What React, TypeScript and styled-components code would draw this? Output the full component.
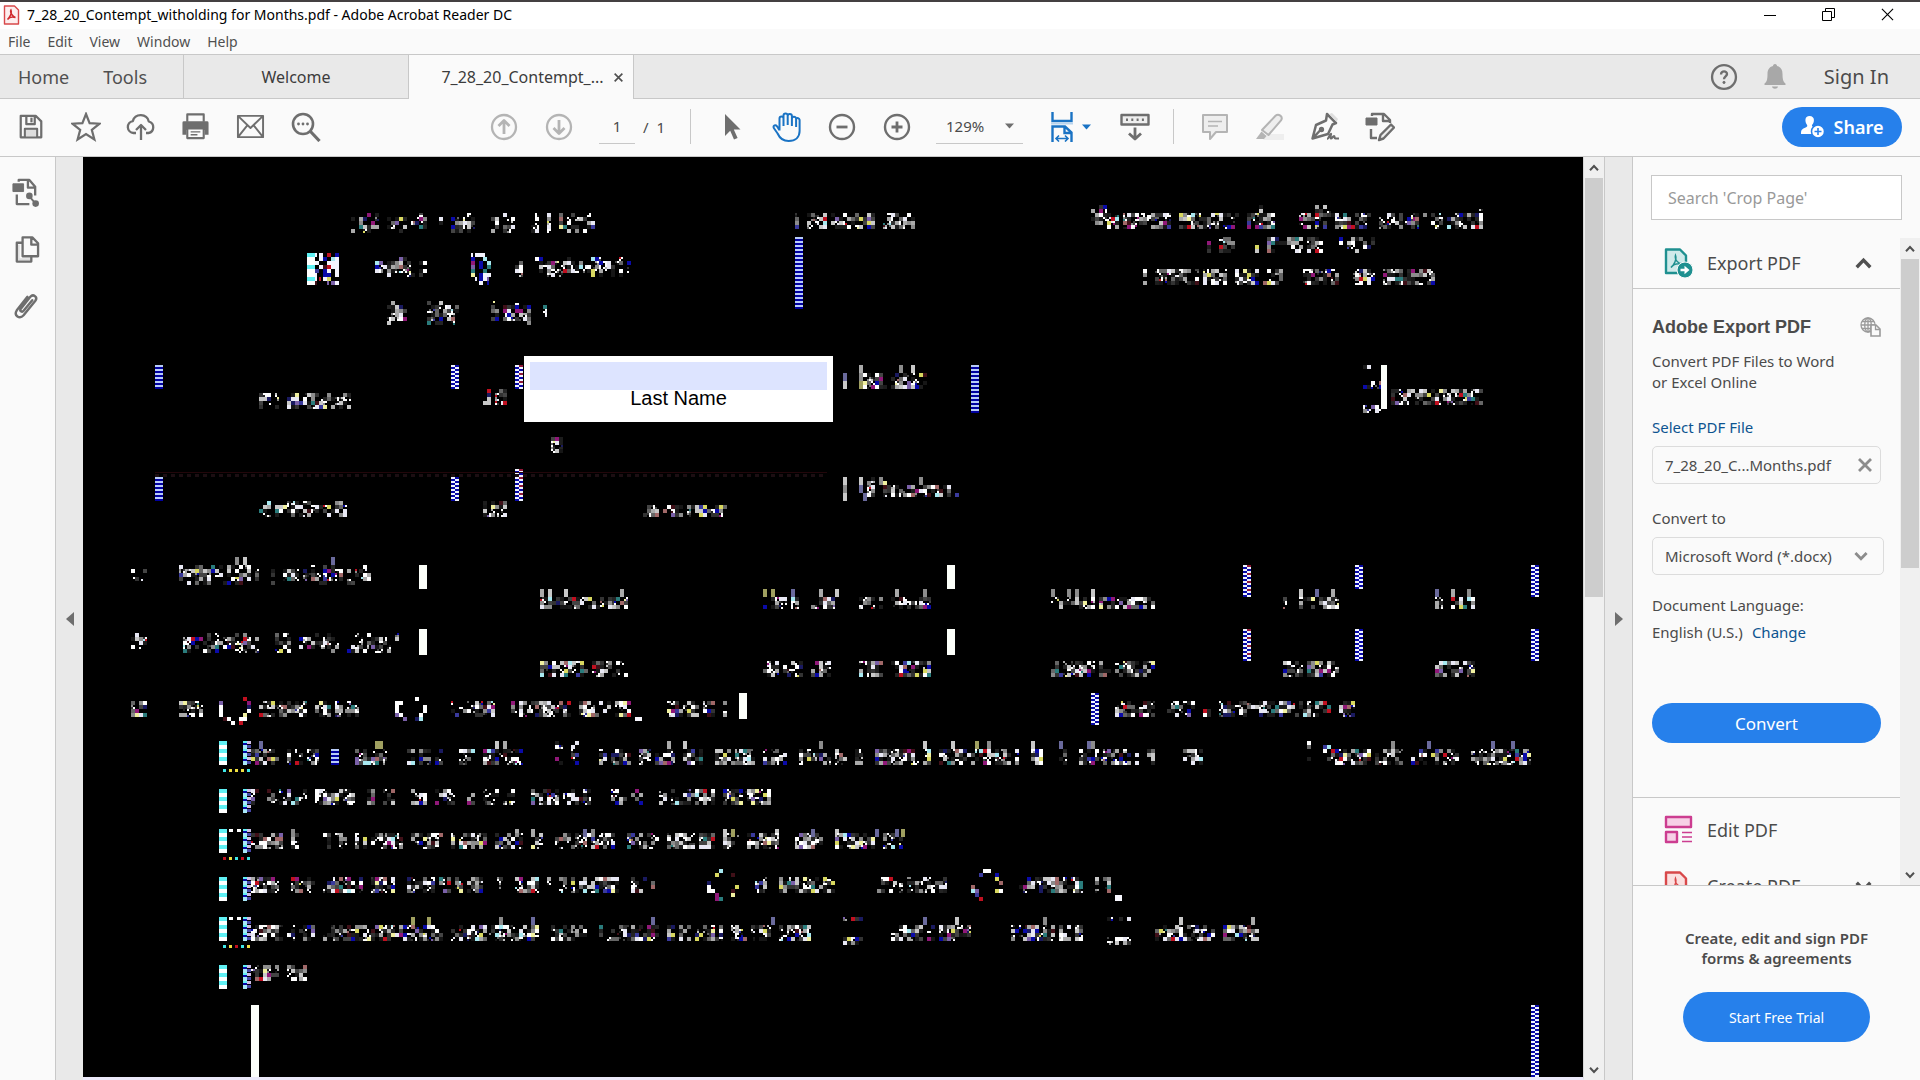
import React from "react";
import styled, { createGlobalStyle, css } from "styled-components";

const ui = `"Noto Sans", "Open Sans", sans-serif`;
const arial = `"Liberation Sans", Arial, sans-serif`;
const line = "#c8c8c8";
const grey = "#6e6e6e";
const blue = "#2680eb";

const Global = createGlobalStyle`
  * { box-sizing: border-box; }
  body { margin: 0; font-family: ${ui}; color: #4b4b4b; background: #fafafa; overflow: hidden; }
  button, input, select { font-family: inherit; color: inherit; margin: 0; }
  button { border: 0; background: none; padding: 0; cursor: pointer; }
  svg { display: block; flex: none; }
`;

const Window = styled.div`
  display: flex;
  flex-direction: column;
  height: 100vh;
  border-top: 2px solid #444041;
`;

const TitleBar = styled.header`
  display: flex;
  align-items: center;
  height: 27px;
  flex: none;
  padding: 0 3px 2px 3px;
  background: #fff;
`;
const Title = styled.h1`
  margin: 0 auto 0 7px;
  font-size: 14px;
  font-weight: 400;
  line-height: 20px;
  color: #000;
`;
const WindowButton = styled.button`
  display: grid;
  place-items: center;
  width: 59px;
  height: 25px;
`;

const MenuBar = styled.nav`
  display: flex;
  align-items: center;
  gap: 17px;
  height: 25px;
  flex: none;
  padding-left: 8px;
`;
const MenuItem = styled.button`
  font-size: 14px;
  line-height: 20px;
  color: #505050;
`;

const TabBar = styled.nav`
  display: flex;
  height: 45px;
  flex: none;
  background: #e9e9e9;
  border-top: 1px solid ${line};
  box-shadow: inset 0 -1px ${line};
`;
const HomeTabs = styled.div`
  display: flex;
  align-items: center;
  gap: 34px;
  width: 184px;
  padding-left: 18px;
  border-right: 1px solid ${line};
`;
const BigTab = styled.button`
  font-size: 18px;
  line-height: 24px;
  color: #505050;
`;
const DocTab = styled.div<{ $active?: boolean }>`
  display: flex;
  align-items: center;
  justify-content: center;
  gap: 10px;
  width: 225px;
  border-right: 1px solid ${line};
  ${(p) => p.$active && css`background: #fafafa; padding-left: 22px;`}
`;
const DocTabLabel = styled.button`
  font-size: 16px;
  line-height: 24px;
  color: #3c3c3c;
`;
const Account = styled.div`
  display: flex;
  align-items: center;
  gap: 38px;
  margin-left: auto;
  padding-right: 31px;
`;
const AccountIcons = styled.div`
  display: flex;
  align-items: center;
  gap: 26px;
`;
const SignIn = styled.button`
  font-size: 20px;
  line-height: 24px;
`;

const Toolbar = styled.div`
  display: flex;
  align-items: center;
  height: 58px;
  flex: none;
  padding: 0 18px 2px 3px;
  border-bottom: 1px solid ${line};
`;
const Group = styled.div<{ $gap?: number }>`
  display: flex;
  align-items: center;
  margin-left: ${(p) => p.$gap ?? 0}px;
`;
const Tool = styled.button`
  display: grid;
  place-items: center;
  width: 55px;
  height: 44px;
`;
const PageBox = styled.input`
  width: 36px;
  height: 34px;
  padding: 0;
  text-align: center;
  font-size: 15px;
  border: 0;
  border-bottom: 1px solid ${line};
  background: none;
`;
const PageTotal = styled.span`
  margin-left: 8px;
  width: 47px;
  font-size: 15px;
  white-space: pre;
`;
const Divider = styled.span`
  width: 1px;
  height: 35px;
  background: ${line};
`;
const ZoomWrap = styled.div`
  display: grid;
  align-items: center;
  width: 87px;
  margin-left: 12px;
  border-bottom: 1px solid ${line};
  & > * { grid-area: 1 / 1; }
  & > svg { justify-self: end; margin-right: 9px; pointer-events: none; }
`;
const ZoomSelect = styled.select`
  appearance: none;
  height: 33px;
  padding: 0 0 0 10px;
  border: 0;
  background: none;
  font-size: 15px;
`;
const FitTool = styled.button`
  display: flex;
  align-items: center;
  gap: 9px;
  width: 56px;
  height: 44px;
  margin-left: 28px;
`;
const Share = styled.button`
  display: flex;
  align-items: center;
  justify-content: center;
  gap: 9px;
  width: 120px;
  height: 40px;
  margin-left: auto;
  border-radius: 20px;
  background: ${blue};
  color: #fff;
  font-size: 18px;
  font-weight: 600;
`;

const Body = styled.div`
  display: flex;
  flex: 1;
  min-height: 0;
`;
const Rail = styled.nav`
  display: flex;
  flex-direction: column;
  width: 56px;
  padding-top: 14px;
  gap: 14px;
  border-right: 1px solid ${line};
`;
const RailButton = styled.button`
  display: grid;
  place-items: center;
  width: 50px;
  height: 43px;
`;
const Collapse = styled.button<{ $line?: boolean }>`
  display: grid;
  place-items: center;
  width: 27px;
  flex: none;
  background: #e9e9e9;
  ${(p) => p.$line && css`width: 28px; border-right: 1px solid ${line};`}
`;
const Canvas = styled.main`
  position: relative;
  flex: 1;
  min-width: 0;
  overflow: hidden;
  background: #000;
  border-right: 1px solid #d8d8d8;
  border-bottom: 3px solid #eceafa;
`;
const FieldCard = styled.label`
  position: absolute;
  left: 441px;
  top: 199px;
  display: flex;
  flex-direction: column;
  align-items: center;
  width: 309px;
  height: 66px;
  padding: 6px 6px 0;
  background: #fff;
  color: #000;
  font: 20px/17px ${arial};
`;
const Field = styled.input`
  width: 100%;
  height: 28px;
  border: 0;
  padding: 0 4px;
  background: #dde4ff;
`;

const Scroll = styled.div<{ $edge?: boolean }>`
  display: flex;
  flex-direction: column;
  width: ${(p) => (p.$edge ? 21 : 20)}px;
  flex: none;
  background: #f0f0f0;
  padding: 0 1px;
  ${(p) => p.$edge && css`border-right: 1px solid ${line};`}
`;
const ScrollButton = styled.button`
  display: grid;
  place-items: center;
  height: 21px;
  flex: none;
`;
const Track = styled.div`
  flex: 1;
`;
const Thumb = styled.div<{ $size: number }>`
  height: ${(p) => p.$size}%;
  background: #cdcdcd;
`;

const Side = styled.aside`
  display: flex;
  flex-direction: column;
  width: 287px;
  flex: none;
`;
const SearchWrap = styled.div`
  padding: 18px 18px 18px;
`;
const Search = styled.input`
  display: block;
  width: 100%;
  height: 45px;
  padding: 0 16px;
  border: 1px solid ${line};
  background: #fff;
  font-size: 16px;
  &::placeholder { color: #999; opacity: 1; }
`;
const SideBody = styled.div`
  display: flex;
  flex: 1;
  min-height: 0;
`;
const Tools = styled.div`
  flex: 1;
  min-width: 0;
  overflow: hidden;
`;
const ToolRow = styled.button<{ $line?: boolean; $height: number }>`
  display: flex;
  align-items: center;
  width: 100%;
  height: ${(p) => p.$height}px;
  padding: 0 28px 0 31px;
  gap: 14px;
  font-size: 18px;
  line-height: 24px;
  text-align: left;
  ${(p) => p.$line && css`border-bottom: 1px solid ${line};`}
  & > span { flex: 1; }
`;
const Export = styled.section`
  display: flex;
  flex-direction: column;
  padding: 26px 19px 54px 19px;
  border-bottom: 1px solid ${line};
  font-size: 15px;
  line-height: 21px;
`;
const ExportHead = styled.div`
  display: flex;
  align-items: center;
  justify-content: space-between;
  height: 24px;
`;
const ExportTitle = styled.h2`
  margin: 0;
  font: bold 18px/22px ${arial};
`;
const Para = styled.p`
  margin: 12px 0 24px;
`;
const Link = styled.a`
  color: #0d5490;
  text-decoration: none;
`;
const FileBox = styled.div`
  display: flex;
  align-items: center;
  justify-content: space-between;
  height: 38px;
  margin: 8px 0 24px;
  padding: 0 8px 0 12px;
  border: 1px solid #dcdcdc;
  border-radius: 5px;
`;
const FormatWrap = styled.div`
  display: grid;
  align-items: center;
  margin: 8px -3px 20px 0;
  & > * { grid-area: 1 / 1; }
  & > svg { justify-self: end; margin-right: 16px; pointer-events: none; }
`;
const Format = styled.select`
  appearance: none;
  height: 38px;
  padding: 0 12px;
  border: 1px solid #dcdcdc;
  border-radius: 5px;
  background: none;
  font-size: 15px;
`;
const Language = styled.p`
  display: flex;
  gap: 9px;
  margin: 6px 0 60px;
`;
const Convert = styled.button`
  height: 40px;
  border-radius: 20px;
  background: ${blue};
  color: #fff;
  font-size: 17px;
`;
const Promo = styled.footer`
  display: flex;
  flex-direction: column;
  align-items: center;
  height: 195px;
  flex: none;
  padding-top: 42px;
  border-top: 1px solid ${line};
`;
const PromoText = styled.p`
  margin: 0 0 24px;
  text-align: center;
  font-size: 15px;
  line-height: 20px;
  font-weight: 600;
`;
const Trial = styled.button`
  width: 187px;
  height: 50px;
  border-radius: 25px;
  background: ${blue};
  color: #fff;
  font-size: 14px;
`;

/* ---------- page render: blocky decoded fragments on black ---------- */

type Box = [number, number, number, number];

const spans = (y0: number, y1: number, ...xs: number[]): Box[] => {
  const out: Box[] = [];
  for (let i = 0; i < xs.length; i += 2) out.push([xs[i], y0, xs[i + 1], y1]);
  return out;
};

const words: Box[] = [
  ...spans(213, 233, 347, 355, 359, 379, 387, 427, 439, 443, 451, 475, 487, 499, 503, 515, 531, 539, 547, 551, 559, 595),
  ...spans(257, 277, 371, 431, 515, 523, 535, 547, 547, 623, 627, 631),
  ...spans(301, 325, 387, 407, 427, 459, 491, 531, 543, 547),
  ...spans(213, 229, 795, 799, 807, 875, 883, 915),
  ...spans(205, 229, 1091, 1107, 1243, 1247, 1259, 1263, 1315, 1331, 1411, 1415, 1479, 1483),
  ...spans(213, 229, 1107, 1123, 1123, 1171, 1179, 1239, 1247, 1275, 1299, 1371, 1379, 1443, 1447, 1483),
  ...spans(237, 253, 1207, 1211, 1219, 1235, 1255, 1259, 1267, 1323, 1327, 1331, 1339, 1375),
  ...spans(269, 285, 1143, 1147, 1155, 1227, 1235, 1259, 1263, 1283, 1299, 1343, 1351, 1375, 1383, 1435),
  ...spans(393, 409, 259, 279, 283, 351),
  ...spans(389, 405, 483, 507, 1391, 1411, 1411, 1483),
  ...spans(501, 517, 259, 271, 275, 347, 483, 507),
  ...spans(505, 517, 643, 659, 663, 727),
  ...spans(437, 453, 551, 563),
  ...spans(373, 389, 863, 887, 891, 927),
  ...spans(477, 497, 867, 875, 883, 887),
  ...spans(485, 497, 883, 951, 955, 959),
  ...spans(565, 585, 131, 147, 179, 259, 271, 275, 283, 299, 303, 343, 347, 371),
  ...spans(597, 609, 540, 560, 560, 628, 763, 803, 811, 835, 859, 883, 891, 931, 1051, 1095, 1099, 1155, 1283, 1287, 1299, 1339, 1435, 1443, 1451, 1475),
  ...spans(633, 653, 131, 147, 179, 259, 271, 291, 299, 339, 347, 403),
  ...spans(661, 677, 540, 628, 763, 803, 811, 835, 859, 883, 891, 931, 1051, 1095, 1099, 1155, 1283, 1339, 1435, 1475),
  ...spans(701, 717, 131, 147, 179, 203, 259, 307, 315, 331, 335, 359, 451, 495, 511, 571, 579, 611, 615, 631, 667, 715, 723, 731, 1115, 1155, 1163, 1195, 1203, 1211, 1219, 1299, 1299, 1331, 1339, 1355),
  ...spans(741, 765, 555, 563, 571, 579, 1307, 1311, 1323, 1331),
  ...spans(749, 765, 251, 283, 287, 319, 355, 387, 403, 443, 459, 475, 483, 523, 599, 631, 639, 675, 683, 703, 715, 755, 763, 787, 795, 847, 855, 867, 875, 931, 939, 1011, 1015, 1019, 1031, 1043, 1059, 1067, 1079, 1139, 1147, 1155, 1179, 1203, 1331, 1371, 1375, 1403, 1411, 1459, 1471, 1531),
  ...spans(789, 805, 251, 259, 267, 307, 315, 355, 363, 395, 411, 427, 435, 455, 467, 475, 483, 515, 531, 591, 611, 643, 659, 715, 723, 771),
  ...spans(833, 849, 251, 283, 291, 299, 323, 347, 355, 403, 411, 443, 451, 487, 495, 523, 531, 543, 555, 615, 627, 659, 667, 715, 723, 739, 747, 779, 795, 823, 835, 875, 883, 907),
  ...spans(877, 893, 251, 279, 291, 315, 323, 363, 371, 395, 403, 435, 435, 483, 495, 503, 515, 539, 547, 619, 631, 655, 755, 771, 779, 835, 877, 895, 899, 947, 1019, 1035, 1035, 1083, 1091, 1111),
  ...spans(925, 941, 251, 283, 287, 315, 323, 403, 403, 443, 451, 491, 491, 539, 551, 587, 599, 659, 667, 723, 731, 771, 779, 811, 891, 971, 1011, 1083, 1155, 1215, 1223, 1259),
  ...spans(917, 921, 843, 863, 1107, 1131),
  ...spans(937, 945, 843, 863, 1107, 1131),
  ...spans(965, 981, 251, 283, 287, 307),
];

/* ascender strokes that rise above the body of a line */
const ascenders: [number, number[]][] = [
  [557, [235, 243, 331]],
  [589, [540, 548, 564, 620, 763, 771, 791, 819, 835, 895, 923, 1051, 1067, 1075, 1091, 1299, 1315, 1331, 1435, 1451, 1467]],
  [741, [259, 375, 379, 495, 503, 667, 683, 819, 923, 951, 975, 987, 1031, 1059, 1087, 1091, 1391, 1427, 1491, 1511]],
  [829, [291, 515, 531, 583, 591, 723, 731, 775, 811, 835, 875, 895, 901]],
  [917, [411, 427, 499, 531, 651, 771, 923, 955, 1043, 1179, 1251]],
  [365, [859, 899, 911]],
  [477, [843, 859, 879, 919]],
  [485, [843, 859]],
  [493, [843, 863]],
  [373, [843, 859]],
  [381, [843, 859]],
];

const bright: Box[] = [
  [307, 253, 339, 285],
  [471, 253, 491, 285],
];

const circles: Box[] = [
  [219, 693, 251, 725],
  [395, 693, 427, 725],
  [707, 869, 739, 901],
  [971, 869, 1003, 901],
];

const striped: Box[] = [
  [155, 365, 163, 389], [155, 477, 163, 501], [795, 237, 803, 309], [971, 365, 979, 413], [331, 749, 339, 765],
];
const checked: Box[] = [
  [451, 365, 459, 389], [515, 365, 523, 389], [451, 477, 459, 501], [515, 469, 523, 501],
  [1243, 565, 1251, 597], [1355, 565, 1363, 589], [1531, 565, 1539, 597],
  [1243, 629, 1251, 661], [1355, 629, 1363, 661], [1531, 629, 1539, 661],
  [1091, 693, 1099, 725], [1531, 1005, 1539, 1077],
];
const solid: Box[] = [
  [419, 565, 427, 589], [947, 565, 955, 589], [419, 629, 427, 655], [947, 629, 955, 655],
  [739, 693, 747, 719], [251, 1005, 259, 1077], [1381, 365, 1387, 409],
];
const tickRows = [741, 789, 829, 877, 917, 965];

const greys = ["#161616", "#1c1c1c", "#242424", "#333", "#444", "#666", "#8c8c8c", "#aaa", "#c8c8c8", "#fff", "#e8e8f4"];
const tints = ["#0b0ba8", "#0b0ba8", "#3a3a9c", "#1a1a60", "#401018", "#c01020", "#d8d860", "#7a60a8", "#2a7c7c", "#a8e8f0", "#901878", "#a06868", "#f0f0a0"];

function buildPage() {
  let seed = 20200728;
  const rnd = () => {
    seed = (seed * 1664525 + 1013904223) >>> 0;
    return seed / 4294967296;
  };
  const pick = (a: string[]) => a[Math.floor(rnd() * a.length)];
  const paths: Record<string, string> = {};
  const put = (c: string, x: number, y: number, w: number, h: number) => {
    paths[c] = (paths[c] || "") + `M${x} ${y}h${w}v${h}h${-w}z`;
  };
  const cell = (x: number, y: number, tint: number) => {
    const color = () => (rnd() < tint ? pick(tints) : pick(greys));
    if (rnd() < 0.25) {
      for (let i = 0; i < 2; i++) for (let j = 0; j < 2; j++) if (rnd() < 0.6) put(rnd() < 0.4 ? "#fff" : color(), x + i * 2, y + j * 2, 2, 2);
    } else put(color(), x, y, 4, 4);
  };
  words.forEach(([x0, y0, x1, y1]) => {
    for (let x = x0; x < x1; x += 4) {
      const rows = Math.ceil((y1 - y0) / 4);
      const open = rnd() < 0.12;
      for (let r = 0; r < rows; r++) {
        const edge = rows > 4 && (r === 0 || r === rows - 1);
        const fill = open ? 0.2 : edge ? 0.35 : 0.74;
        if (rnd() < fill) cell(x, y0 + r * 4, 0.2);
      }
    }
  });
  ascenders.forEach(([y, xs]) => xs.forEach((x) => put(pick(["#c8c8c8", "#8c8c8c", "#6a6a9c", "#aaa", "#a0a060"]), x, y, 4, 8)));
  bright.forEach(([x0, y0, x1, y1]) => {
    for (let x = x0; x < x1; x += 4)
      for (let y = y0; y < y1; y += 4) {
        if (x < x0 + 8 && x0 < 400) put((y / 4) % 3 < 1 ? "#60f0f4" : "#fff", x, y, 4, 4);
        else if (rnd() < 0.7) put(rnd() < 0.55 ? "#f4f4ff" : pick(tints), x, y, rnd() < 0.3 ? 2 : 4, 4);
      }
  });
  circles.forEach(([x0, y0, x1, y1]) => {
    const cx = (x0 + x1) / 2;
    const cy = (y0 + y1) / 2;
    for (let x = x0; x < x1; x += 4)
      for (let y = y0; y < y1; y += 4) {
        const d = Math.hypot(x + 2 - cx, y + 2 - cy);
        const dim = y < cy - 6 || (x < cx && x0 === 395);
        if (d > 11 && d < 17 && rnd() < (dim ? 0.3 : 0.75)) put(rnd() < 0.4 ? "#fff" : pick(tints), x, y, 4, 4);
      }
  });
  striped.forEach(([x0, y0, x1, y1]) => {
    for (let y = y0; y < y1; y += 4) {
      put("#b8ccf8", x0, y, x1 - x0, 2);
      put("#0000a0", x0, y + 2, x1 - x0, 2);
      put("#b8ccf8", x0 + 2, y + 2, 3, 1);
    }
  });
  checked.forEach(([x0, y0, x1, y1]) => {
    put("#f0f4ff", x0, y0, x1 - x0, y1 - y0);
    for (let y = y0; y < y1; y += 4) {
      put("#0808a8", x0, y + 2, 4, 2);
      put((x0 === 1243 || x0 === 515) && y % 8 > 3 ? "#901838" : "#0808a8", x0 + 4, y, 4, 2);
    }
  });
  solid.forEach(([x0, y0, x1, y1]) => put("#fcfffa", x0, y0, x1 - x0, y1 - y0));
  tickRows.forEach((y, i) => {
    for (let k = 0; k < 24; k += 4) {
      put(k % 8 ? "#fff" : "#60f0f4", 219, y + k, 8, 4);
      put(k % 8 ? "#a8e8f8" : "#60f0f4", 243, y + k, 4, 4);
      put("#0808a8", 243, y + k + 2, 4, 2);
      put(k % 8 ? "#4848a8" : "#d0c0e8", 247, y + k, 4, 3);
    }
    if (i % 2 === 0) for (let x = 223; x < 251; x += 6) put(pick(["#f0e040", "#c01020", "#40e8e8"]), x, y + 28, 3, 3);
    if (i === 2 || i === 4) [229, 237].forEach((x) => put("#fff", x, y, 4, 3));
  });
  for (let x = 155; x < 827; x += 8) {
    put("#22060a", x, 472, 8, 1);
    put("#1c0e12", x, 474, 4, 3);
  }
  [365, 381, 385, 405, 409].forEach((y) => {
    for (let x = 1363; x < 1381; x += 4) if (rnd() < 0.7) cell(x, y, 0.5);
  });
  put("#f8f8ff", 635, 717, 7, 4);
  put("#f8f8ff", 1115, 895, 7, 6);
  return Object.entries(paths);
}
const pagePaths = buildPage();

const PageArt = () => (
  <svg width="1500" height="920" viewBox="83 157 1500 920" shapeRendering="crispEdges" aria-hidden="true">
    {pagePaths.map(([c, d]) => <path key={c} fill={c} d={d} />)}
  </svg>
);

/* ---------- icons ---------- */

const Icon = ({ s = 30, c = grey, w = 2, children }: { s?: number; c?: string; w?: number; children: React.ReactNode }) => (
  <svg width={s} height={s} viewBox="0 0 30 30" fill="none" stroke={c} strokeWidth={w} strokeLinejoin="round" aria-hidden="true">{children}</svg>
);
const Chevron = ({ up, c = "#505050", w = 10 }: { up?: boolean; c?: string; w?: number }) => (
  <svg width={w} height={w} viewBox="0 0 10 10" fill="none" stroke={c} strokeWidth="2" aria-hidden="true">
    <path d={up ? "M1 7.2 5 3l4 4.2" : "M1 2.8 5 7l4-4.2"} />
  </svg>
);
const Caret = ({ c = grey }: { c?: string }) => (
  <svg width="9" height="6" viewBox="0 0 9 6" aria-hidden="true"><path d="M0 .5h9L4.500 5.500z" fill={c} /></svg>
);
const Save = <Icon s={28} w={2.4}><path d="M4 3h16l6 6v17H4zM10 3v9h9V3M8.500 26v-9h13v9" /><path d="M15.500 5v5" /><path d="M9.500 18h11v7h-11z" fill="#dedede" stroke="none" /></Icon>;
const Star = <Icon w={2.2}><path d="M15 2l3.600 9.200 9.900.5-7.700 6.200 2.600 9.600L15 22l-8.400 5.500 2.600-9.600-7.700-6.200 9.900-.5z" strokeLinejoin="miter" /></Icon>;
const Cloud = <Icon w={2.3}><path d="M10 21H7.500a6 6 0 0 1-.7-11.900 8.300 8.300 0 0 1 16 .4A5.900 5.900 0 0 1 22.500 21H20M15 28V14M10 18l5-5 5 5" /></Icon>;
const Print = <Icon s={29} w={2.2}><path d="M6.500 10V2.500h17V10" /><path d="M3 9.500h24q1.500 0 1.500 1.500v12.500h-4v-5h-19v5h-4V11q0-1.500 1.500-1.500z" fill={grey} stroke="none" /><path d="M6.500 17h17v10h-17z" fill="#fafafa" /><path d="M10 20.500h10M10 23.500h7" strokeWidth="1.400" /></Icon>;
const Mail = <Icon s={29} w={2}><path d="M2 4h26v22H2zM2 4l13 12.500L28 4M2 26l9.500-12M28 26l-9.500-12" /></Icon>;
const Find = <Icon w={2.6}><circle cx="12" cy="12" r="10" /><path d="M19.500 19.500 28.500 29" strokeWidth="3.200" /><g fill={grey} stroke="none"><circle cx="7.500" cy="12" r="1.400" /><circle cx="12" cy="12" r="1.400" /><circle cx="16.500" cy="12" r="1.400" /></g></Icon>;
const PageUp = <Icon c="#b4b4b4" w={2.3}><circle cx="15" cy="15" r="12" /><path d="M15 22V9M9.500 14 15 8.500l5.500 5.500" strokeWidth="2.800" /></Icon>;
const PageDown = <Icon c="#b4b4b4" w={2.3}><circle cx="15" cy="15" r="12" /><path d="M15 8v13M9.500 16l5.500 5.500 5.500-5.500" strokeWidth="2.800" /></Icon>;
const Pointer = <Icon><path d="M8 2v22l5.200-5.200 3.800 8.700 3.600-1.600-3.800-8.400h6.700z" fill={grey} stroke="none" /></Icon>;
const Hand = <Icon c="#1a73c4" w={2}><path d="M7.500 18.500V6.500a2 2 0 0 1 4 0V14M11.500 13V3.500a2 2 0 0 1 4.200 0V13M15.700 13V4a2 2 0 0 1 4.200 0v10M19.900 14V7a2 2 0 0 1 4.200-.2 2 2 0 0 1 3.500 1V19c0 6-4 10-11 10-6.500 0-9-3-11-7.500L1.800 16c-1-2.500 1.700-3.700 3.200-1.700l2.500 4M24.100 7v8" /></Icon>;
const Minus = <Icon w={2.4}><circle cx="15" cy="15" r="12" /><path d="M9.500 15h11" strokeWidth="2.800" /></Icon>;
const Plus = <Icon w={2.4}><circle cx="15" cy="15" r="12" /><path d="M9.500 15h11M15 9.500v11" strokeWidth="2.800" /></Icon>;
const FitWidth = <svg width="22" height="30" viewBox="0 0 22 30" fill="none" stroke="#1a73c4" strokeWidth="2.400" aria-hidden="true"><path d="M1.500 0v9h19V0" /><path d="M0 11.500h22" stroke="#b8d4ee" strokeWidth="2" /><path d="M1.500 30V14.500H14l6.500 6V30M13.500 15v6h6.500" /><path d="M5 26.500h12M8 23.500l-3 3 3 3M14 23.500l3 3-3 3" strokeWidth="1.600" /></svg>;
const Keyboard = <Icon w={2.400}><path d="M1.500 3h27v9.500h-27z" fill="#eee" /><path d="M6 7.700h18" strokeDasharray="2 3.300" strokeWidth="2.600" /><path d="M15 15.500v11M9 21.500l6 5.500 6-5.500" strokeWidth="2.800" /></Icon>;
const Comment = <Icon c="#b4b4b4" w={2}><path d="M3 3h24v17H16l-6 7v-7H3z" fill="#eee" /><path d="M8 9.500h14M8 14h10" strokeWidth="1.600" /></Icon>;
const Marker = <Icon c="#b4b4b4" w={2}><path d="M12 22h17v6H8z" fill="#eee" stroke="none" /><path d="M7 18 20.500 3.800c3-2.800 8 .8 5.500 4.600L13.500 23z" fill="#eee" /><path d="M6.500 19.500l5 4.500-2.500 3H1z" fill="#b4b4b4" stroke="none" /></Icon>;
const Sign = <Icon w={2.500}><path d="M17 2l9 9-3.500 1.500-4.500 9.500L2.500 26.500 6 13l10-4.500zM2.500 26.500l8-8.500" /><circle cx="11.500" cy="17.500" r="1.400" fill={grey} /><path d="M19 2l3-1 6 6-1.500 3z" fill="#dedede" stroke="none" /><path d="M17 27c2 0 2-4 4-5-.5 2-1 4 0 4.500 1 0 2-2.500 3-2.500s0 2.500 1.500 2.500H29" strokeWidth="2.200" /></Icon>;
const MoreTools = <Icon w={2.400}><path d="M7 4V2h12l6 6v3M18 2v7h7M6 17v9h6" /><path d="M1 6h11v7H1z" fill={grey} stroke={grey} strokeWidth="1" /><path d="M14 28l1.500-5L26 12.500l3 3L18.500 26.500z" fill="#eee" /></Icon>;
const RailShare = <Icon s={29} w={2.400}><path d="M8 4V2h11l6 7v9M17.500 2v8H25M6 17v10h13" /><path d="M2 6h11v8H2z" fill={grey} stroke={grey} strokeWidth="1" /><path d="M19 19l6 7" strokeWidth="2" /><g fill={grey} stroke="none"><circle cx="19" cy="18.500" r="3.400" /><circle cx="25.500" cy="26.500" r="3.400" /></g></Icon>;
const RailPages = <Icon s={29} w={2.400}><path d="M8 10v15h12" stroke="#dedede" strokeWidth="2" /><path d="M12 2.500h10l6 6V22H12zM21 3v7h7" /><path d="M12 8H6v19.500h15V22" /></Icon>;
const Clip = <Icon s={29} w={2.500}><path d="M21 9.500l-9 11c-1.600 2-4.500 0-2.800-2.300L19 6c3-3.500 8 .3 5.200 4L12 25c-4 4.500-10.500.5-7-5L16 6" transform="translate(1 -1)" strokeLinecap="round" /></Icon>;

const Acrobat = (
  <svg width="17" height="20" viewBox="0 0 17 20" fill="none" aria-hidden="true">
    <path d="M1.500 1h10l4 4v14h-14z" fill="#fdeeee" stroke="#d8484a" strokeWidth="1.400" strokeLinejoin="round" />
    <path d="M8 5c-1.500 2.500 2 7 4.500 7.500C9.500 11.500 6 12.500 4.500 14.500 6.500 12.500 9.500 8 8 5z" stroke="#d02a2e" strokeWidth="1.500" />
  </svg>
);
const ExportIcon = (
  <svg width="29" height="30" viewBox="0 0 29 30" fill="none" aria-hidden="true">
    <path d="M2 1.500h14l6 6V25H2z" fill="#cfeaea" stroke="#1f9090" strokeWidth="2.400" strokeLinejoin="round" />
    <path d="M11.500 7.500c-1 4 2 7.500 6 8.500-4-.8-8 0-10.500 3.500 3-2.500 6-8 4.500-12z" stroke="#1f9090" strokeWidth="1.500" />
    <circle cx="21" cy="22" r="8" fill="#1f9090" stroke="#fafafa" />
    <path d="M16.500 20.800h4v-3l5 4.200-5 4.200v-3h-4z" fill="#fff" />
  </svg>
);
const CreateIcon = (
  <svg width="29" height="30" viewBox="0 0 29 30" fill="none" aria-hidden="true">
    <path d="M2 1.500h14l6 6V25H2z" fill="#fbe0e0" stroke="#d8484a" strokeWidth="2.400" strokeLinejoin="round" />
    <path d="M11.500 7.500c-1 4 2 7.500 6 8.500-4-.8-8 0-10.500 3.500 3-2.500 6-8 4.500-12z" stroke="#d8484a" strokeWidth="1.500" />
  </svg>
);
const EditIcon = (
  <svg width="29" height="30" viewBox="0 0 29 30" fill="none" stroke="#cc3d90" aria-hidden="true">
    <path d="M2 2h25v10H2zM2 17h11v10H2z" fill="#f7d0e6" strokeWidth="2.400" strokeLinejoin="round" />
    <path d="M18 17.500h10M18 22h10M18 26.500h10" strokeWidth="1.500" />
  </svg>
);
const GlobeDoc = (
  <svg width="21" height="20" viewBox="0 0 21 20" fill="none" stroke="#9a9a9a" strokeWidth="1.300" aria-hidden="true">
    <circle cx="8" cy="8" r="7" /><ellipse cx="8" cy="8" rx="3.300" ry="7" /><path d="M1 8h14M8 1v14M2 4.500h12M2 11.500h12" />
    <path d="M11 8h5l4 4v7h-9z" fill="#fafafa" strokeWidth="1.600" /><path d="M15.500 8v4.500H20" />
  </svg>
);
const Help = <Icon s={28} w={2.500}><circle cx="15" cy="15" r="12.800" /><path d="M11.800 12.200c0-4.300 6.600-4 6.400-.3-.1 2.300-3.200 2.600-3.200 5.400" /><circle cx="15" cy="20.800" r="1.200" fill={grey} strokeWidth="1" /></Icon>;
const Bell = <svg width="22" height="26" viewBox="0 0 22 26" fill="#a8a8a8" aria-hidden="true"><path d="M11 0c1.500 0 2 1 2 2 4 1 5.500 4 5.500 8 0 6 1 8 3 9.500V21H.5v-1.500c2-1.500 3-3.500 3-9.500 0-4 1.500-7 5.500-8 0-1 .5-2 2-2zM8 22.500h6c-.5 3-5.500 3-6 0z" /></svg>;
const Person = <svg width="24" height="22" viewBox="0 0 24 22" fill="#fff" aria-hidden="true"><path d="M8.500 0c6 0 5 7 2.500 9-.5 2 3 2.500 5 4v5H0c0-5 1.500-5 5.500-7 1.500-1 .5-2 0-3C4 5.500 3.500 0 8.500 0z" /><circle cx="17" cy="15.500" r="6.500" stroke={blue} strokeWidth="1.500" /><path d="M13.500 15.500h7M17 12v7" stroke={blue} strokeWidth="1.600" /></svg>;
const Cross = ({ s, c, w = 2 }: { s: number; c: string; w?: number }) => (
  <svg width={s} height={s} viewBox="0 0 14 14" fill="none" stroke={c} strokeWidth={w} aria-hidden="true"><path d="M1 1l12 12M13 1 1 13" /></svg>
);

const ScrollBar = ({ size, edge }: { size: number; edge?: boolean }) => (
  <Scroll $edge={edge}>
    <ScrollButton aria-label="Scroll up"><Chevron up /></ScrollButton>
    <Track><Thumb $size={size} /></Track>
    <ScrollButton aria-label="Scroll down"><Chevron /></ScrollButton>
  </Scroll>
);

export default function App() {
  return (
    <Window>
      <Global />
      <TitleBar>
        {Acrobat}
        <Title>7_28_20_Contempt_witholding for Months.pdf - Adobe Acrobat Reader DC</Title>
        <WindowButton aria-label="Minimize"><svg width="12" height="12" stroke="#000"><path d="M0 6.500h12" /></svg></WindowButton>
        <WindowButton aria-label="Restore"><svg width="13" height="13" fill="none" stroke="#000"><path d="M.5 3.500h9v9h-9zM3.500 3V.5h9v9H10" /></svg></WindowButton>
        <WindowButton aria-label="Close"><Cross s={13} c="#000" w={1.2} /></WindowButton>
      </TitleBar>
      <MenuBar>
        {["File", "Edit", "View", "Window", "Help"].map((m) => <MenuItem key={m}>{m}</MenuItem>)}
      </MenuBar>
      <TabBar>
        <HomeTabs><BigTab>Home</BigTab><BigTab>Tools</BigTab></HomeTabs>
        <DocTab><DocTabLabel>Welcome</DocTabLabel></DocTab>
        <DocTab $active>
          <DocTabLabel>7_28_20_Contempt_...</DocTabLabel>
          <button aria-label="Close tab"><Cross s={9} c="#505050" w={2.6} /></button>
        </DocTab>
        <Account>
          <AccountIcons>
            <button aria-label="Help">{Help}</button>
            <button aria-label="Notifications">{Bell}</button>
          </AccountIcons>
          <SignIn>Sign In</SignIn>
        </Account>
      </TabBar>
      <Toolbar>
        <Group>
          <Tool aria-label="Save">{Save}</Tool>
          <Tool aria-label="Star">{Star}</Tool>
          <Tool aria-label="Upload">{Cloud}</Tool>
          <Tool aria-label="Print">{Print}</Tool>
          <Tool aria-label="Email">{Mail}</Tool>
          <Tool aria-label="Find">{Find}</Tool>
        </Group>
        <Group $gap={143}>
          <Tool aria-label="Previous page">{PageUp}</Tool>
          <Tool aria-label="Next page">{PageDown}</Tool>
        </Group>
        <Group $gap={13}>
          <PageBox aria-label="Page number" defaultValue="1" />
          <PageTotal>/  1</PageTotal>
          <Divider />
        </Group>
        <Group $gap={13}>
          <Tool aria-label="Select">{Pointer}</Tool>
          <Tool aria-label="Pan">{Hand}</Tool>
          <Tool aria-label="Zoom out">{Minus}</Tool>
          <Tool aria-label="Zoom in">{Plus}</Tool>
          <ZoomWrap>
            <ZoomSelect aria-label="Zoom level"><option>129%</option></ZoomSelect>
            <Caret />
          </ZoomWrap>
          <FitTool aria-label="Fit width">{FitWidth}<Caret c="#1a73c4" /></FitTool>
          <Tool aria-label="Read mode">{Keyboard}</Tool>
        </Group>
        <Group $gap={11}>
          <Divider />
        </Group>
        <Group $gap={13}>
          <Tool aria-label="Comment">{Comment}</Tool>
          <Tool aria-label="Highlight">{Marker}</Tool>
          <Tool aria-label="Sign">{Sign}</Tool>
          <Tool aria-label="More tools">{MoreTools}</Tool>
        </Group>
        <Share>{Person}Share</Share>
      </Toolbar>
      <Body>
        <Rail>
          <RailButton aria-label="Shared tools">{RailShare}</RailButton>
          <RailButton aria-label="Page thumbnails">{RailPages}</RailButton>
          <RailButton aria-label="Attachments">{Clip}</RailButton>
        </Rail>
        <Collapse aria-label="Show left pane"><svg width="8" height="14"><path d="M8 0v14L0 7z" fill={grey} /></svg></Collapse>
        <Canvas>
          <PageArt />
          <FieldCard>
            <Field />
            Last Name
          </FieldCard>
        </Canvas>
        <ScrollBar size={47.6} edge />
        <Collapse $line aria-label="Hide right pane"><svg width="8" height="14"><path d="M0 0v14l8-7z" fill={grey} /></svg></Collapse>
        <Side>
          <SearchWrap><Search aria-label="Search tools" placeholder="Search 'Crop Page'" /></SearchWrap>
          <SideBody>
            <Tools>
              <ToolRow $height={51} $line>{ExportIcon}<span>Export PDF</span><Chevron up w={17} /></ToolRow>
              <Export>
                <ExportHead><ExportTitle>Adobe Export PDF</ExportTitle>{GlobeDoc}</ExportHead>
                <Para>Convert PDF Files to Word<br />or Excel Online</Para>
                <Link href="#select">Select PDF File</Link>
                <FileBox>7_28_20_C...Months.pdf<button aria-label="Remove file"><Cross s={14} c="#8c8c8c" w={2.8} /></button></FileBox>
                <label htmlFor="format">Convert to</label>
                <FormatWrap>
                  <Format id="format"><option>Microsoft Word (*.docx)</option></Format>
                  <Chevron c="#8c8c8c" w={14} />
                </FormatWrap>
                <span>Document Language:</span>
                <Language>English (U.S.)<Link href="#language">Change</Link></Language>
                <Convert>Convert</Convert>
              </Export>
              <ToolRow $height={64}>{EditIcon}<span>Edit PDF</span></ToolRow>
              <ToolRow $height={48}>{CreateIcon}<span>Create PDF</span><Chevron w={17} /></ToolRow>
            </Tools>
            <ScrollBar size={51} />
          </SideBody>
          <Promo>
            <PromoText>Create, edit and sign PDF<br />forms &amp; agreements</PromoText>
            <Trial>Start Free Trial</Trial>
          </Promo>
        </Side>
      </Body>
    </Window>
  );
}
